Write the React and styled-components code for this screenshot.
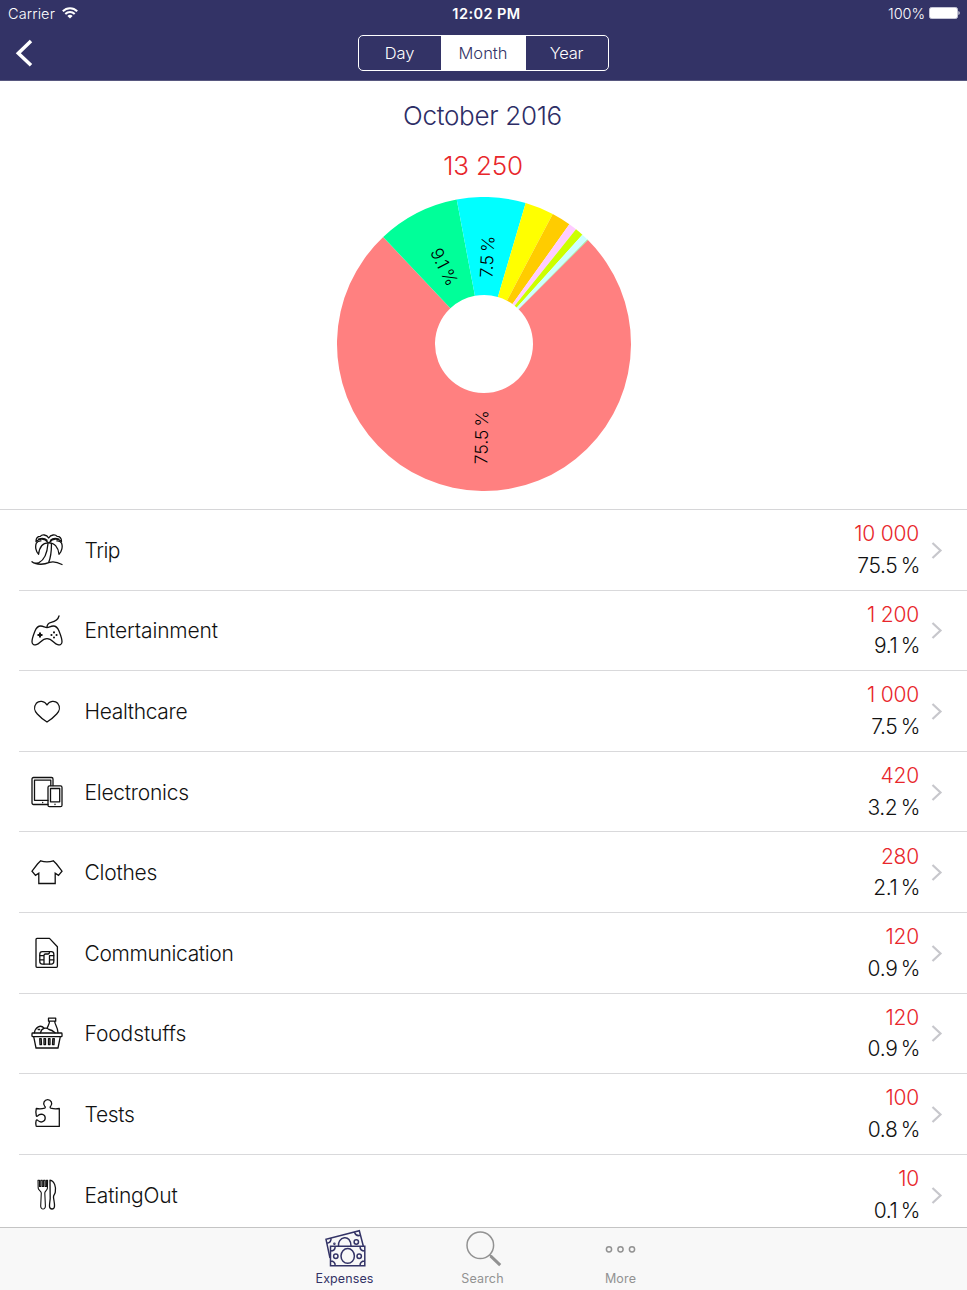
import styled, { createGlobalStyle } from "styled-components";

const GlobalStyle = createGlobalStyle`
  * {
    box-sizing: border-box;
  }

  body {
    margin: 0;
    background-color: #ffffff;
    font-family: Inter, "Liberation Sans", sans-serif;
    font-weight: 300;
  }
`;

const Screen = styled.div`
  display: flex;
  flex-direction: column;
  width: 967px;
  height: 1290px;
  overflow: hidden;
  background-color: #ffffff;
`;

const Header = styled.header`
  height: 81px;
  flex-shrink: 0;
  background-color: #333366;
  border-bottom: 1px solid #57577f;
  color: #ffffff;
`;

const StatusBar = styled.div`
  display: grid;
  grid-template-columns: 1fr auto 1fr;
  align-items: center;
  height: 26px;
  padding: 0 7px 0 8px;
  font-size: 15px;
  font-weight: 350;
`;

const StatusLeft = styled.div`
  display: flex;
  align-items: center;
  gap: 7px;
  font-size: 14.5px;
  letter-spacing: 0.1px;
`;

const Clock = styled.div`
  font-size: 14.5px;
  font-weight: 600;
  letter-spacing: 0.45px;
  padding-left: 5px;
`;

const StatusRight = styled.div`
  display: flex;
  align-items: center;
  justify-content: flex-end;
  gap: 4px;
  font-size: 14.5px;
  letter-spacing: -0.05px;
`;

const NavBar = styled.nav`
  display: grid;
  grid-template-columns: 1fr auto 1fr;
  align-items: center;
  height: 54px;
  padding: 0 0 0 15px;
`;

const BackButton = styled.button`
  display: flex;
  width: 20px;
  padding: 0;
  border: none;
  background: none;
`;

const Segments = styled.div`
  display: flex;
  width: 251px;
  height: 36px;
  margin-right: 16px;
  border: 1.4px solid #ffffff;
  border-radius: 5px;
  overflow: hidden;
`;

const Segment = styled.button`
  width: ${(props) => props.$width}px;
  padding: 0;
  border: none;
  background-color: ${(props) => (props.$active ? "#ffffff" : "transparent")};
  color: ${(props) => (props.$active ? "#333366" : "#ffffff")};
  font-family: inherit;
  font-size: 16.5px;
  font-weight: 350;
  letter-spacing: ${(props) => props.$tracking}px;
`;

const Summary = styled.section`
  display: flex;
  flex-direction: column;
  align-items: center;
  height: 428px;
  flex-shrink: 0;
`;

const Period = styled.h1`
  margin: 18px 2px 0 0;
  height: 34px;
  line-height: 34px;
  font-size: 26px;
  font-weight: 300;
  letter-spacing: -0.3px;
  color: #2d2d66;
`;

const Total = styled.div`
  margin: 16px 1px 0 0;
  height: 34px;
  line-height: 34px;
  font-size: 26px;
  letter-spacing: -0.2px;
  color: #e8262b;
`;

const Chart = styled.svg`
  display: block;
  margin: 14px 0 0 1px;

  text {
    font-size: 17.5px;
    font-weight: 300;
    word-spacing: -2px;
    fill: #000000;
    text-anchor: middle;
    dominant-baseline: central;
  }
`;

const List = styled.ul`
  flex: 1;
  min-height: 0;
  margin: 0;
  padding: 0;
  list-style: none;
  overflow: hidden;
  border-top: 1px solid #d6d6d8;
`;

const Row = styled.li`
  display: flex;
  align-items: center;
  height: 80.6px;
  margin-left: 19px;
  padding: 0 24px 0 12px;
  border-bottom: 1px solid #d9d9db;
`;

const CategoryName = styled.div`
  flex: 1;
  margin: 1px 0 0 21.5px;
  font-size: 21px;
  letter-spacing: ${(props) => props.$tracking}px;
  color: #111111;
`;

const Amounts = styled.div`
  display: flex;
  flex-direction: column;
  align-items: flex-end;
  margin-right: 12px;
  font-size: 21px;
  line-height: 31.5px;
  color: #111111;
`;

const Amount = styled.div`
  letter-spacing: -0.2px;
  color: #e8262b;
`;

const Percent = styled.div`
  letter-spacing: -0.35px;
  word-spacing: -2.3px;
  margin-right: -1px;
`;

const LineIcon = styled.svg`
  display: block;
  flex-shrink: 0;
  fill: none;
  stroke: #111111;
  stroke-width: 1.3;
  stroke-linejoin: round;
  stroke-linecap: round;
`;

const TabBar = styled.footer`
  display: flex;
  justify-content: center;
  height: 63px;
  flex-shrink: 0;
  padding-right: 2px;
  border-top: 1px solid #c4c4c4;
  background-color: #f8f8f8;
`;

const Tab = styled.div`
  display: flex;
  flex-direction: column;
  align-items: center;
  width: 138px;
  padding-top: 1px;
  color: ${(props) => (props.$active ? "#333366" : "#929292")};
  font-size: 12.5px;
  font-weight: 400;
  line-height: 16px;
  letter-spacing: ${(props) => props.$tracking}px;

  svg {
    display: block;
    margin-bottom: 2px;
    fill: none;
    stroke: currentColor;
    stroke-width: 1.5;
  }
`;

const categories = [
  {
    name: "Trip",
    amount: "10 000",
    percent: "75.5 %",
    tracking: -0.5,
    icon: (
      <>
        <path d="M1 27.800c2 2 4.500 1.700 7 .8 5-2.500 8.200-9.500 9-19.100M20.400 9.300c.2 7-.6 13.500-2.700 19M4 29.300c5 1.700 10 1 14.500-.9 4-1.200 7-.8 12.500 2.100" />
        <path d="M17.600 8.800C12 8.600 8.400 13 7.600 20.300 4.700 17.500 4 12.500 5.300 9.200 6.500 7.200 8.500 6.700 10 6.800M17.600 8.800c5.600-.2 9.600 4.200 10.400 11.500 2.900-2.800 3.900-7.800 2.600-11.100-1.200-2-3.200-2.400-4.700-2.300" />
        <path d="M17.700 4C15.500.3 11 .3 9.300 2.300 6.500 2.300 5 4.500 5 7.500c3.500-3.300 8.500-3.600 12 1M17.700 4c2.200-3.700 6.700-3.700 8.400-1.700 2.800 0 4.400 2.200 4.400 5.200C27 4.200 21.900 3.900 18.400 8.500M7.500 5.200c3-1.200 6.500-.9 8.500 1M28 5.200c-3-1.200-6.500-.9-8.500 1" />
      </>
    ),
  },
  {
    name: "Entertainment",
    amount: "1 200",
    percent: "9.1 %",
    tracking: -0.15,
    icon: (
      <>
        <path d="M16 13.300c0-2.600 1.500-4.300 4.200-4.900C24.500 7.400 27 6 28 2" />
        <path d="M16 13.500c-2.200 0-3.500-1.500-6.300-1.500-3 0-4.400 1.800-5.700 5C2 22 .8 25.500 1 28c.2 2.300 2 3.300 4.300 2.700 3.700-1 5.700-6 10.700-6s7 5 10.700 6c2.300.6 4.100-.4 4.300-2.700.2-2.500-1-6-3-11-1.300-3.200-2.700-5-5.700-5-2.800 0-4.100 1.500-6.300 1.500z" />
        <path d="M9 18.400v5M6.500 20.900h5" strokeWidth="2" strokeLinecap="butt" />
        <path d="M23 18.300v.1M23 23.400v.1M20.400 20.900h.1M25.500 20.900h.1" strokeWidth="2" />
      </>
    ),
  },
  {
    name: "Healthcare",
    amount: "1 000",
    percent: "7.5 %",
    tracking: -0.35,
    icon: (
      <path d="M16 10c-2.500-4.500-8-4.700-10.700-1.700C2.500 11.700 3.500 16 6.300 19c2.500 2.700 6 5.800 9.700 8 3.700-2.200 7.200-5.300 9.700-8 2.800-3 3.800-7.300 1-10.700C24 5.300 18.500 5.500 16 10z" />
    ),
  },
  {
    name: "Electronics",
    amount: "420",
    percent: "3.2 %",
    tracking: -0.25,
    icon: (
      <>
        <path d="M17 28.500H2.500A1.500 1.500 0 0 1 1 27V3a1.500 1.500 0 0 1 1.500-1.500h18A1.500 1.500 0 0 1 22 3v6.500M17 24.300H3.500V4.200h16.300v5.300M11.700 26.300v.3" />
        <rect x="17" y="9.900" width="14" height="20.800" rx="1.500" />
        <path d="M19.500 12.500h9.200v13.300h-9.200zM24 28.200v.3" />
      </>
    ),
  },
  {
    name: "Clothes",
    amount: "280",
    percent: "2.1 %",
    tracking: -0.25,
    icon: (
      <path
        strokeLinejoin="miter"
        d="M9.700 4.800Q16 7 22.300 4.800L25.500 8 31 15.200l-3.500 4.100-3.300-2.100v10.300H7.800V17.200l-3.300 2.100L1 15.200 6.500 8z"
      />
    ),
  },
  {
    name: "Communication",
    amount: "120",
    percent: "0.9 %",
    tracking: -0.35,
    icon: (
      <>
        <path d="M6 1.400h12.500l7.900 8.300v19.600a1 1 0 0 1-1 1H6a1 1 0 0 1-1-1V2.400a1 1 0 0 1 1-1z" />
        <rect x="8.800" y="14.600" width="14" height="12.500" rx="2.500" />
        <path d="M8.800 18.700H13M8.800 22.900H13M18.500 18.700h4.200M18.500 22.900h4.200M13 27v-8.500q0-1.500 1.500-1.500h2.500q1.500 0 1.500-2.300M18.500 18.700V27" />
      </>
    ),
  },
  {
    name: "Foodstuffs",
    amount: "120",
    percent: "0.9 %",
    tracking: -0.1,
    icon: (
      <>
        <rect x="1" y="16" width="30" height="3.600" rx="0.7" />
        <path d="M2.700 19.700 5 31h22l2.300-11.300" />
        <path d="M8.700 21.600h1.500l.3 6H9zM13 21.600h1.500v6H13zM17.500 21.600H19v6h-1.500zM21.800 21.600h1.500l-.3 6h-1.500z" />
        <path d="M17.500 1.200h7.200v3h-7.200zM18.500 4.300c.1 3-2 5-2.300 7M23.700 4.300c.1 4 3.200 5.500 3.300 11.500M3.300 15.800C4.500 10 9.500 7.300 13 11M9.500 15.800c.8-4.500 5.500-6 8.500-3.300 2.500.2 4 1.300 6 3.300M7.200 12.500h1.500" />
      </>
    ),
  },
  {
    name: "Tests",
    amount: "100",
    percent: "0.8 %",
    tracking: -0.3,
    icon: (
      <path d="M5.300 17.500c-.6-2.500-.5-5 0-7q4.500.7 8.300-.3c.9-.3.900-1.300.1-2.100C11.300 5.400 13.500 1.700 16.700 1.700S22.100 5.400 19.700 8.100c-.8.8-.8 1.800.1 2.100q4 1 8.500.3v17.900H6q-1 0-1-1.200-.5-2.500.2-4.700c.3-.8 1-.8 1.600-.1 2.900 3 7.400 1.300 7.400-2.300s-4.500-5.300-7.400-2.300c-.6.700-1.300.7-1.500 0z" />
    ),
  },
  {
    name: "EatingOut",
    amount: "10",
    percent: "0.1 %",
    tracking: -0.2,
    icon: (
      <>
        <path strokeWidth="1.100" d="M7 1.200h1.500v6.300h1.300V1.200h1.500v6.300h1.300V1.200h1.500v6.300h1.300V1.200h1.200l-.2 8c-.1 2-2.700 2.800-2.600 4.800l.6 13c.1 4-4.800 4-4.700 0l.6-13c.1-2-3-2.800-3.100-4.800z" />
        <path d="M19 1.200c4.500.8 6.300 7 5.300 12-.4 2.500-2 2.700-1.800 5 .3 3.300 1.200 6 1 9-.3 3.700-4.800 3.700-5 0-.1-3 .6-5 .7-8z" />
      </>
    ),
  },
];

// Ring slices, drawn clockwise from 45 degrees
const slices = [
  { value: 10000, color: "#ff8080" },
  { value: 1200, color: "#00ff99" },
  { value: 1000, color: "#00ffff" },
  { value: 420, color: "#ffff00" },
  { value: 280, color: "#ffcc00" },
  { value: 120, color: "#ffccff" },
  { value: 120, color: "#ccff00" },
  { value: 100, color: "#ccffff" },
  { value: 10, color: "#80e680" },
];

const tabs = [
  {
    label: "Expenses",
    active: true,
    tracking: 0.1,
    icon: (
      <>
        <path d="M6 29 2 10.300 35.300 1.700 39.300 17M14.500 17c-.6-4 2-7.700 5.800-8.300 3.800-.5 6.500 2.500 6.700 8.300M3.200 14.300c3-.4 4-2 3.900-5.200M30.500 3.200c1 3 2.700 4 5.700 3.200" />
        <circle cx="32.300" cy="13" r="2.200" />
        <circle cx="10.400" cy="14.700" r="0.500" />
        <path d="M6.500 17.200h34.300v19.600H6.500zM6.500 22c3 0 4.700-1.500 4.700-4.800M36 17.200c0 3.300 1.700 4.800 4.800 4.800M6.500 32c3 0 4.700 1.500 4.700 4.800M36 36.800c0-3.300 1.700-4.800 4.800-4.800" />
        <ellipse cx="23.700" cy="26.900" rx="6.700" ry="7.400" />
        <circle cx="11.800" cy="27.300" r="2.200" />
        <circle cx="35.200" cy="27.300" r="2.200" />
      </>
    ),
  },
  {
    label: "Search",
    tracking: 0.15,
    icon: (
      <>
        <circle cx="18.300" cy="16.300" r="13.300" />
        <path d="m27.500 25.700 2 2" />
        <path d="m28.500 26.800 9.700 9.400" strokeWidth="3" />
      </>
    ),
  },
  {
    label: "More",
    tracking: 0.15,
    icon: (
      <>
        <circle cx="9" cy="20.300" r="2.600" />
        <circle cx="20.500" cy="20.300" r="2.600" />
        <circle cx="32" cy="20.300" r="2.600" />
      </>
    ),
  },
];

function polar(radius, angle) {
  const rad = (angle * Math.PI) / 180;
  return `${147 + radius * Math.sin(rad)} ${147 - radius * Math.cos(rad)}`;
}

function slicePath(start, end) {
  const large = end - start > 180 ? 1 : 0;
  return `M${polar(147, start)}A147 147 0 ${large} 1 ${polar(147, end)}L${polar(49, end)}A49 49 0 ${large} 0 ${polar(49, start)}Z`;
}

function PieChart() {
  const total = slices.reduce((sum, slice) => sum + slice.value, 0);
  let angle = 45;

  return (
    <Chart width="294" height="294" viewBox="0 0 294 294">
      {slices.map((slice, index) => {
        const start = angle;
        angle += (slice.value / total) * 360;
        return <path key={index} d={slicePath(start, angle)} fill={slice.color} />;
      })}
      <text transform="translate(144.200 240.300) rotate(-89)">75.5 %</text>
      <text transform="translate(107.500 69.700) rotate(63)">9.1 %</text>
      <text transform="translate(150 59.700) rotate(-87)">7.5 %</text>
    </Chart>
  );
}

function App() {
  return (
    <>
      <GlobalStyle />
      <Screen>
        <Header>
          <StatusBar>
            <StatusLeft>
              <span>Carrier</span>
              <svg width="16" height="12" viewBox="0 0 16 12" fill="none" stroke="#fff" strokeWidth="2">
                <path d="M.8 4.300c4-4.200 10.400-4.200 14.400 0M3.300 7c2.700-2.700 6.700-2.700 9.400 0" />
                <path d="M8 11.500 5.400 8.900c1.500-1.400 3.700-1.400 5.200 0z" fill="#fff" stroke="none" />
              </svg>
            </StatusLeft>
            <Clock>12:02 PM</Clock>
            <StatusRight>
              <span>100%</span>
              <svg width="31" height="12" viewBox="0 0 31 12">
                <rect x="0.500" y="0.500" width="28" height="11" rx="2" fill="#fff" stroke="#c5c5d6" />
                <path d="M29.500 4c1.500.5 1.500 3.500 0 4z" fill="#fff" />
              </svg>
            </StatusRight>
          </StatusBar>
          <NavBar>
            <BackButton>
              <svg width="20" height="28" viewBox="0 0 20 28" fill="none" stroke="#fff" strokeWidth="3.500">
                <path d="M16 2 3.300 14.200 16 26.300" />
              </svg>
            </BackButton>
            <Segments>
              <Segment $width={82} $tracking={-0.1}>Day</Segment>
              <Segment $width={85} $tracking={0}  $active>Month</Segment>
              <Segment $width={82} $tracking={-0.2}>Year</Segment>
            </Segments>
          </NavBar>
        </Header>
        <Summary>
          <Period>October 2016</Period>
          <Total>13 250</Total>
          <PieChart />
        </Summary>
        <List>
          {categories.map((category) => (
            <Row key={category.name}>
              <LineIcon width="32" height="32" viewBox="0 0 32 32">
                {category.icon}
              </LineIcon>
              <CategoryName $tracking={category.tracking}>{category.name}</CategoryName>
              <Amounts>
                <Amount>{category.amount}</Amount>
                <Percent>{category.percent}</Percent>
              </Amounts>
              <svg width="12" height="18" viewBox="0 0 12 18" fill="none" stroke="#c7c7cc" strokeWidth="2.200">
                <path d="m1.500 2 8 7.500-8 7.500" />
              </svg>
            </Row>
          ))}
        </List>
        <TabBar>
          {tabs.map((tab) => (
            <Tab key={tab.label} $active={tab.active} $tracking={tab.tracking}>
              <svg width="42" height="40" viewBox="0 0 42 40">
                {tab.icon}
              </svg>
              {tab.label}
            </Tab>
          ))}
        </TabBar>
      </Screen>
    </>
  );
}

export default App;
